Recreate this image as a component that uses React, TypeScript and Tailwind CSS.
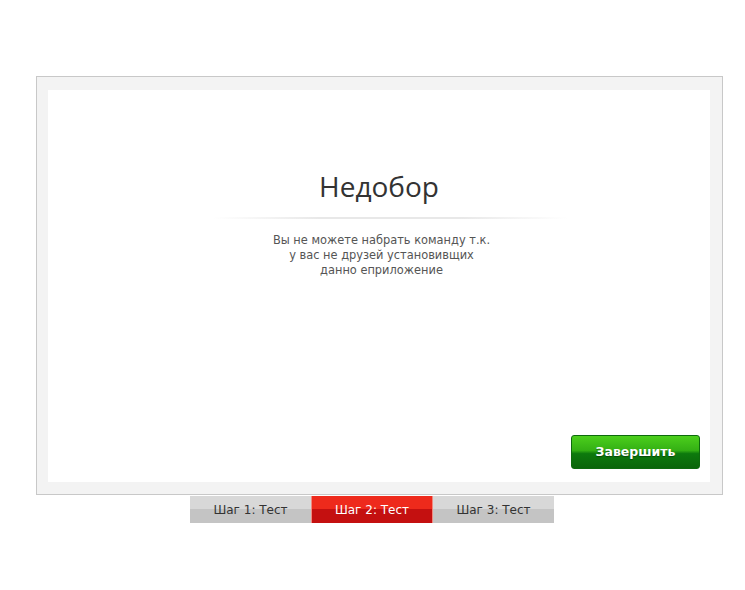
export default function App() {
  const steps = [
    { label: "Шаг 1: Тест", active: false },
    { label: "Шаг 2: Тест", active: true },
    { label: "Шаг 3: Тест", active: false },
  ];

  return (
    <div className="w-[745px] h-[590px] bg-white pt-[76px] pl-[36px] font-['DejaVu_Sans',sans-serif]">
      <div className="w-[687px] h-[419px] border border-[#c8c8c8] bg-[#f3f3f3] pt-[13px] pl-[11px]">
        <div className="w-[662px] h-[392px] bg-white flex flex-col items-center relative">
          <h1 className="mt-[78px] text-[28px] leading-[36px] text-[#333] font-['Open_Sans',sans-serif]">
            Недобор
          </h1>
          <div className="mt-[13px] ml-[22px] w-[354px] h-[2px] bg-[linear-gradient(to_right,rgba(232,232,232,0),#e8e8e8_30%,#e8e8e8_70%,rgba(232,232,232,0))]" />
          <p className="mt-[14px] text-center text-[11.4px] leading-[15px] text-[#555] ml-[5px]">
            Вы не можете набрать команду т.к.
            <br />
            у вас не друзей установивщих
            <br />
            данно еприложение
          </p>
          <button className="absolute right-[10px] bottom-[13px] w-[129px] h-[34px] rounded-[3px] border border-[#0d6a0d] bg-[linear-gradient(to_bottom,#4ccf1c,#34b014_45%,#0d7a0d_55%,#0a650a)] text-white font-bold text-[12.5px] [text-shadow:0_1px_1px_rgba(0,0,0,0.4)]">
            Завершить
          </button>
        </div>
      </div>
      <div className="flex ml-[154px] mt-[1px]">
        {steps.map((s) => (
          <div
            key={s.label}
            className={
              s.active
                ? "w-[122px] h-[27px] flex items-center justify-center text-[12px] text-white bg-[linear-gradient(to_bottom,#ee2a1c_50%,#c41010_50%)] border-x border-[#f08a80]"
                : "w-[121px] h-[27px] flex items-center justify-center text-[12px] text-[#333] bg-[linear-gradient(to_bottom,#d8d8d8_50%,#c4c4c4_50%)]"
            }
          >
            {s.label}
          </div>
        ))}
      </div>
    </div>
  );
}
